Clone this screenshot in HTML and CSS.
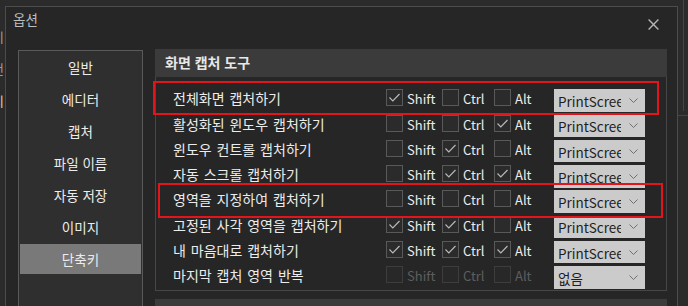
FILE: index.html
```html
<!DOCTYPE html>
<html lang="ko">
<head>
<meta charset="utf-8">
<title>옵션</title>
<link rel="stylesheet" href="styles.css">
</head>
<body>
<div class="desk">
  <div class="bg-left"><span>기</span><span>전</span><span class="bright">지</span></div>
  <div class="bg-right"><div class="bg-scroll"></div></div>
  <div class="dialog">
    <div class="titlebar">
      <span class="title">옵션</span>
      <svg class="close" width="11" height="11" viewBox="0 0 11 11"><path d="M0.6 0.6L10.4 10.4M10.4 0.6L0.6 10.4" stroke="#b4b4b4" stroke-width="1.4" fill="none"/></svg>
    </div>
    <div class="content">
      <nav class="sidebar">
        <div class="nav-item">일반</div>
        <div class="nav-item">에디터</div>
        <div class="nav-item">캡처</div>
        <div class="nav-item">파일 이름</div>
        <div class="nav-item">자동 저장</div>
        <div class="nav-item">이미지</div>
        <div class="nav-item active">단축키</div>
      </nav>
      <main class="main">
        <section class="group">
          <div class="group-head">화면 캡처 도구</div>
          <div class="group-body">
            <div class="row">
              <span class="label">전체화면 캡처하기</span>
              <span class="chk shift"><span class="box"><svg viewBox="0 0 15 15"><path d="M2.5 7.5L5.8 10.8L12.5 4"/></svg></span><span class="txt">Shift</span></span>
              <span class="chk ctrl"><span class="box"></span><span class="txt">Ctrl</span></span>
              <span class="chk alt"><span class="box"></span><span class="txt">Alt</span></span>
              <span class="select"><span class="val">PrintScreen</span><svg class="chev" width="9" height="5" viewBox="0 0 9 5"><path d="M0.5 0.5L4.5 4.5L8.5 0.5"/></svg></span>
            </div>
            <div class="row">
              <span class="label">활성화된 윈도우 캡처하기</span>
              <span class="chk shift"><span class="box"></span><span class="txt">Shift</span></span>
              <span class="chk ctrl"><span class="box"></span><span class="txt">Ctrl</span></span>
              <span class="chk alt"><span class="box"><svg viewBox="0 0 15 15"><path d="M2.5 7.5L5.8 10.8L12.5 4"/></svg></span><span class="txt">Alt</span></span>
              <span class="select"><span class="val">PrintScreen</span><svg class="chev" width="9" height="5" viewBox="0 0 9 5"><path d="M0.5 0.5L4.5 4.5L8.5 0.5"/></svg></span>
            </div>
            <div class="row">
              <span class="label">윈도우 컨트롤 캡처하기</span>
              <span class="chk shift"><span class="box"></span><span class="txt">Shift</span></span>
              <span class="chk ctrl"><span class="box"><svg viewBox="0 0 15 15"><path d="M2.5 7.5L5.8 10.8L12.5 4"/></svg></span><span class="txt">Ctrl</span></span>
              <span class="chk alt"><span class="box"></span><span class="txt">Alt</span></span>
              <span class="select"><span class="val">PrintScreen</span><svg class="chev" width="9" height="5" viewBox="0 0 9 5"><path d="M0.5 0.5L4.5 4.5L8.5 0.5"/></svg></span>
            </div>
            <div class="row">
              <span class="label">자동 스크롤 캡처하기</span>
              <span class="chk shift"><span class="box"></span><span class="txt">Shift</span></span>
              <span class="chk ctrl"><span class="box"><svg viewBox="0 0 15 15"><path d="M2.5 7.5L5.8 10.8L12.5 4"/></svg></span><span class="txt">Ctrl</span></span>
              <span class="chk alt"><span class="box"><svg viewBox="0 0 15 15"><path d="M2.5 7.5L5.8 10.8L12.5 4"/></svg></span><span class="txt">Alt</span></span>
              <span class="select"><span class="val">PrintScreen</span><svg class="chev" width="9" height="5" viewBox="0 0 9 5"><path d="M0.5 0.5L4.5 4.5L8.5 0.5"/></svg></span>
            </div>
            <div class="row">
              <span class="label">영역을 지정하여 캡처하기</span>
              <span class="chk shift"><span class="box"></span><span class="txt">Shift</span></span>
              <span class="chk ctrl"><span class="box"></span><span class="txt">Ctrl</span></span>
              <span class="chk alt"><span class="box"></span><span class="txt">Alt</span></span>
              <span class="select"><span class="val">PrintScreen</span><svg class="chev" width="9" height="5" viewBox="0 0 9 5"><path d="M0.5 0.5L4.5 4.5L8.5 0.5"/></svg></span>
            </div>
            <div class="row">
              <span class="label">고정된 사각 영역을 캡처하기</span>
              <span class="chk shift"><span class="box"><svg viewBox="0 0 15 15"><path d="M2.5 7.5L5.8 10.8L12.5 4"/></svg></span><span class="txt">Shift</span></span>
              <span class="chk ctrl"><span class="box"><svg viewBox="0 0 15 15"><path d="M2.5 7.5L5.8 10.8L12.5 4"/></svg></span><span class="txt">Ctrl</span></span>
              <span class="chk alt"><span class="box"></span><span class="txt">Alt</span></span>
              <span class="select"><span class="val">PrintScreen</span><svg class="chev" width="9" height="5" viewBox="0 0 9 5"><path d="M0.5 0.5L4.5 4.5L8.5 0.5"/></svg></span>
            </div>
            <div class="row">
              <span class="label">내 마음대로 캡처하기</span>
              <span class="chk shift"><span class="box"><svg viewBox="0 0 15 15"><path d="M2.5 7.5L5.8 10.8L12.5 4"/></svg></span><span class="txt">Shift</span></span>
              <span class="chk ctrl"><span class="box"><svg viewBox="0 0 15 15"><path d="M2.5 7.5L5.8 10.8L12.5 4"/></svg></span><span class="txt">Ctrl</span></span>
              <span class="chk alt"><span class="box"><svg viewBox="0 0 15 15"><path d="M2.5 7.5L5.8 10.8L12.5 4"/></svg></span><span class="txt">Alt</span></span>
              <span class="select"><span class="val">PrintScreen</span><svg class="chev" width="9" height="5" viewBox="0 0 9 5"><path d="M0.5 0.5L4.5 4.5L8.5 0.5"/></svg></span>
            </div>
            <div class="row disabled">
              <span class="label">마지막 캡처 영역 반복</span>
              <span class="chk shift"><span class="box"></span><span class="txt">Shift</span></span>
              <span class="chk ctrl"><span class="box"></span><span class="txt">Ctrl</span></span>
              <span class="chk alt"><span class="box"></span><span class="txt">Alt</span></span>
              <span class="select"><span class="val">없음</span><svg class="chev" width="9" height="5" viewBox="0 0 9 5"><path d="M0.5 0.5L4.5 4.5L8.5 0.5"/></svg></span>
            </div>
          </div>
        </section>
        <div class="group-head next"></div>
      </main>
    </div>
  </div>
  <div class="mark mark-1"></div>
  <div class="mark mark-2"></div>
</div>
</body>
</html>
```

FILE: styles.css
```css
* { box-sizing: border-box; }

html, body {
  margin: 0;
  padding: 0;
  background: #2b2b2b;
}

body {
  font-family: "Noto Sans CJK KR", "Noto Sans", sans-serif;
  font-size: 13px;
  color: #ececec;
}

.desk {
  position: relative;
  width: 688px;
  height: 306px;
  overflow: hidden;
  background: #2b2b2b;
}

.bg-left {
  position: absolute;
  left: -8px;
  top: 21px;
  width: 13px;
  display: flex;
  flex-direction: column;
  color: #9a9a9a;
}

.bg-left span {
  line-height: 32px;
  height: 32px;
}

.bg-left .bright { color: #cfcfcf; }

.bg-right {
  position: absolute;
  left: 678px;
  top: 0;
  width: 10px;
  height: 116px;
  border-bottom: 1px solid #444444;
}

.bg-scroll {
  margin-left: 5px;
  height: 111px;
  border-left: 1px solid #444444;
}

.dialog {
  position: absolute;
  left: 5px;
  top: 6px;
  width: 673px;
  height: 330px;
  border: 1px solid #4c4c4c;
  background: #262626;
}

.titlebar {
  height: 36px;
  display: flex;
  justify-content: space-between;
  align-items: flex-start;
  padding: 3px 18px 0 7px;
}

.title {
  font-size: 13.5px;
  line-height: 19px;
  color: #bdbdbd;
}

.close {
  margin-top: 9px;
  display: block;
}

.content {
  display: flex;
  align-items: flex-start;
  padding-left: 12px;
}

.sidebar {
  width: 125px;
  height: 300px;
  margin-top: 7px;
  border: 1px solid #5a5a5a;
  background: #2f2f2f;
  padding: 1px 0;
}

.nav-item {
  height: 30px;
  line-height: 30px;
  margin: 0 1px 2px;
  text-align: center;
  font-size: 13.5px;
  color: #ececec;
}

.nav-item.active {
  background: #797979;
}

.main {
  width: 512px;
  margin-left: 12px;
  margin-top: 6px;
}

.group-head {
  height: 28px;
  line-height: 27px;
  padding-left: 10px;
  background: #3b3b3b;
  font-size: 14px;
  font-weight: 700;
  color: #e8e8e8;
}

.group-head.next {
  margin-top: 8px;
}

.group-body {
  border: 1px solid #474747;
  border-top: 0;
  padding: 8.85px 0 2.15px 17px;
}

.row {
  display: flex;
  align-items: flex-start;
  height: 25.25px;
}

.label {
  width: 213px;
  margin-top: 3.65px;
  line-height: 19px;
  font-size: 14px;
  word-spacing: 1px;
  white-space: nowrap;
  color: #ececec;
}

.chk {
  display: flex;
  align-items: flex-start;
}

.chk.shift { width: 56px; }
.chk.ctrl { width: 52px; }
.chk.alt { width: 60px; }

.box {
  width: 17px;
  height: 17px;
  margin-top: 3.45px;
  border: 1px solid #595959;
  background: #2b2b2b;
  display: block;
}

.box svg {
  display: block;
  width: 15px;
  height: 15px;
  fill: none;
  stroke: #b8b8b8;
  stroke-width: 1.2;
}

.txt {
  margin-left: 4px;
  margin-top: 3.65px;
  line-height: 19px;
  color: #ececec;
}

.select {
  width: 91px;
  height: 22.5px;
  margin-top: 3.45px;
  background: #cbcbcb;
  display: flex;
  align-items: center;
  padding-left: 4px;
}

.val {
  width: 62.5px;
  overflow: hidden;
  white-space: nowrap;
  color: #1e1e1e;
  font-size: 13.5px;
  line-height: 19px;
  margin-top: 2px;
}

.chev {
  display: block;
  margin-left: 8.5px;
  fill: none;
  stroke: #707070;
  stroke-width: 1;
}

.row.disabled .box {
  border-color: #3d3d3d;
  background: #282828;
}

.row.disabled .txt {
  color: #5e5e5e;
}

.mark {
  position: absolute;
  border: 2px solid #e3141b;
}

.mark-1 {
  left: 153px;
  top: 81px;
  width: 506px;
  height: 34px;
}

.mark-2 {
  left: 158px;
  top: 183px;
  width: 505px;
  height: 35px;
}
```
